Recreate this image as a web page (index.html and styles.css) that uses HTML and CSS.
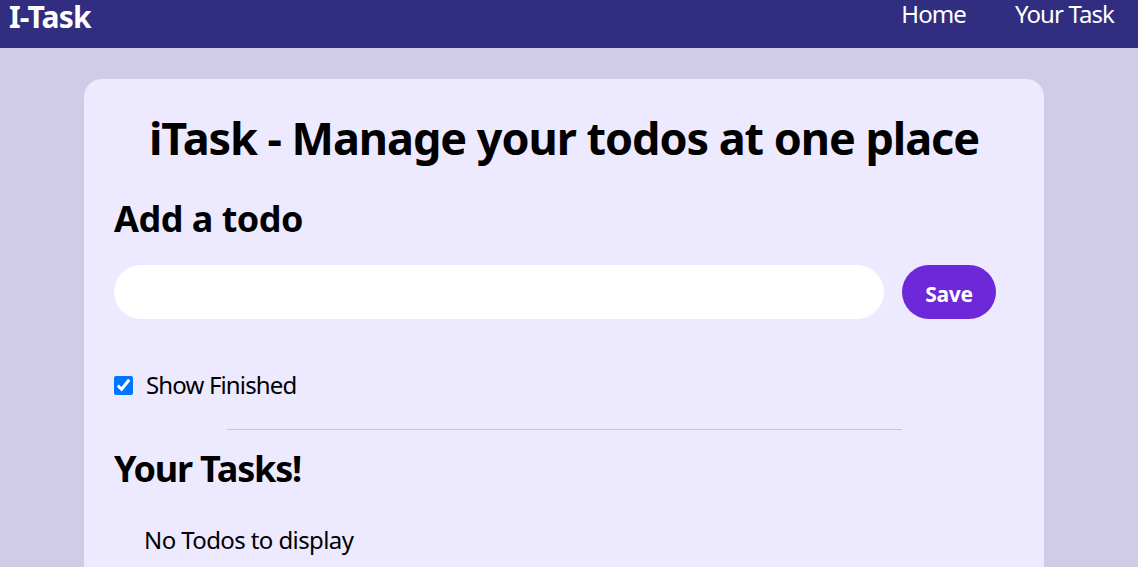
FILE: index.html
```html
<!DOCTYPE html>
<html lang="en">
<head>
<meta charset="utf-8">
<title>iTask</title>
<link rel="stylesheet" href="styles.css">
</head>
<body>
<nav class="nav">
  <div class="logo">I-Task</div>
  <ul class="links">
    <li class="link">Home</li>
    <li class="link">Your Task</li>
  </ul>
</nav>
<main class="page">
  <section class="card">
    <h1 class="title">iTask - Manage your todos at one place</h1>
    <h2 class="heading heading-add">Add a todo</h2>
    <div class="add-row">
      <input class="todo-input" type="text">
      <button class="save">Save</button>
    </div>
    <label class="show">
      <input class="check" type="checkbox" checked>
      <span class="show-text">Show Finished</span>
    </label>
    <div class="divider"></div>
    <h2 class="heading heading-tasks">Your Tasks!</h2>
    <div class="todos">
      <div class="empty">No Todos to display</div>
    </div>
  </section>
</main>
</body>
</html>
```

FILE: styles.css
```css
* { box-sizing: border-box; }

body {
  margin: 0;
  background: #d0cbe7;
  font-family: "Noto Sans", "Open Sans", sans-serif;
  color: #000;
}

.nav {
  height: 48px;
  background: #312d80;
  color: #fff;
  display: flex;
  justify-content: space-between;
  align-items: flex-start;
  padding: 2px 24px 0 9px;
}

.logo {
  font-size: 30px;
  font-weight: 700;
  line-height: 1;
  letter-spacing: -0.8px;
}

.links {
  list-style: none;
  margin: 0;
  padding: 0;
  display: flex;
  gap: 49px;
}

.link {
  font-size: 24px;
  line-height: 1;
  letter-spacing: -0.9px;
}

.page {
  padding: 31px 0 0 84px;
}

.card {
  width: 960px;
  min-height: 520px;
  background: #ede9fe;
  border-radius: 18px;
  padding: 36px 30px 30px;
}

.title {
  margin: 0;
  text-align: center;
  font-size: 45px;
  line-height: 1;
  font-weight: 700;
  letter-spacing: -1.05px;
}

.heading {
  margin: 0;
  font-size: 36px;
  line-height: 1;
  font-weight: 700;
}

.heading-add {
  margin-top: 41px;
  letter-spacing: -0.5px;
}

.add-row {
  margin-top: 28px;
  display: flex;
  gap: 18px;
}

.todo-input {
  width: 770px;
  height: 54px;
  border: none;
  border-radius: 27px;
  background: #fff;
  padding: 0 20px;
  font: inherit;
  outline: none;
}

.save {
  width: 94px;
  height: 54px;
  border: none;
  border-radius: 27px;
  background: #6d28d9;
  color: #fff;
  font-family: inherit;
  font-size: 21px;
  font-weight: 700;
  letter-spacing: -0.3px;
  padding: 4px 0 0;
}

.show {
  margin-top: 54px;
  display: flex;
  align-items: center;
  gap: 13px;
  font-size: 24px;
  line-height: 1;
}

.show-text { letter-spacing: -0.85px; }

.check {
  width: 19px;
  height: 19px;
  margin: 0;
  accent-color: #0075ff;
}

.divider {
  width: 675px;
  margin: 32px auto 0;
  border-top: 1px solid #c8c2da;
}

.heading-tasks {
  margin-top: 21px;
  letter-spacing: -1.2px;
}

.todos { margin-top: 41px; }

.empty {
  margin-left: 30px;
  font-size: 24px;
  line-height: 1;
  letter-spacing: -0.6px;
}
```
